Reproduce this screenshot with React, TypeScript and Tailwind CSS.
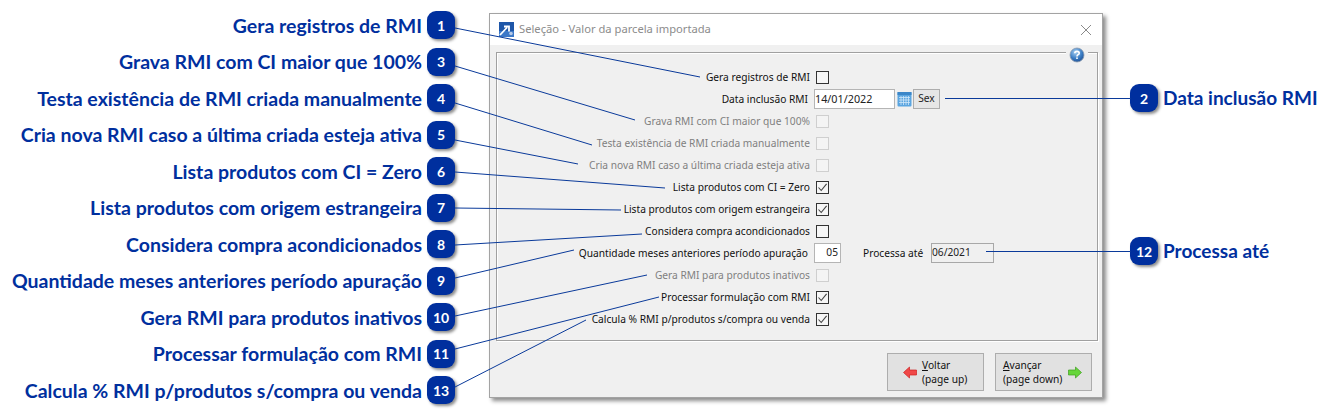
import React from "react";

const leftItems: [string, number][] = [
  ["Gera registros de RMI", 1],
  ["Grava RMI com CI maior que 100%", 3],
  ["Testa existência de RMI criada manualmente", 4],
  ["Cria nova RMI caso a última criada esteja ativa", 5],
  ["Lista produtos com CI = Zero", 6],
  ["Lista produtos com origem estrangeira", 7],
  ["Considera compra acondicionados", 8],
  ["Quantidade meses anteriores período apuração", 9],
  ["Gera RMI para produtos inativos", 10],
  ["Processar formulação com RMI", 11],
  ["Calcula % RMI p/produtos s/compra ou venda", 13],
];

const lines: [number, number, number, number][] = [
  [455, 28, 700, 77],
  [455, 66, 635, 120],
  [455, 103, 592, 145],
  [455, 140, 578, 164],
  [455, 172, 665, 188],
  [455, 208, 621, 210],
  [455, 245, 642, 234],
  [455, 278, 574, 250],
  [455, 316, 647, 275],
  [455, 349, 659, 297],
  [455, 387, 586, 320],
  [945, 98.5, 1131, 98.5],
  [986, 251.5, 1131, 251.5],
];

function Badge({ n }: { n: number }) {
  return (
    <div className="flex h-[28px] w-[28px] shrink-0 items-center justify-center rounded-[9px] bg-[#002f9e] font-['Lato',sans-serif] text-[14px] font-bold text-white shadow-[2px_2px_3px_rgba(0,0,0,0.45)]">
      {n}
    </div>
  );
}

function Check({ state }: { state: "on" | "off" | "disabled" }) {
  const cls =
    state === "disabled"
      ? "border-[#cfcfcf] bg-[#f4f4f4]"
      : "border-[#333333] bg-[#f6f6f6]";
  return (
    <div className={`flex h-[13px] w-[13px] shrink-0 items-center justify-center border ${cls}`}>
      {state === "on" && (
        <svg width="11" height="11" viewBox="0 0 11 11" fill="none">
          <path d="M1.5 5.5 L4.2 8.5 L9.6 1.8" stroke="#444" strokeWidth="1.1" />
        </svg>
      )}
    </div>
  );
}

function Row({ label, state }: { label: string; state: "on" | "off" | "disabled" }) {
  return (
    <div className="flex h-[22px] items-center">
      <div className={`w-[313px] whitespace-nowrap pt-[2px] text-right ${state === "disabled" ? "text-[#808080]" : "text-[#111111]"}`}>
        {label}
      </div>
      <div className="ml-[6px]">
        <Check state={state} />
      </div>
    </div>
  );
}

export default function App() {
  return (
    <div className="relative flex h-[419px] w-[1335px] overflow-hidden bg-white font-['Noto_Sans',sans-serif]">
      {/* left callouts */}
      <div className="flex w-[455px] shrink-0 flex-col pt-[7px]">
        {leftItems.map(([t, n]) => (
          <div key={n} className="flex h-[36.5px] items-center justify-end">
            <span className="mr-[5px] whitespace-nowrap font-['Lato',sans-serif] text-[19.5px] font-bold text-[#002f9e]">
              {t}
            </span>
            <Badge n={n} />
          </div>
        ))}
      </div>

      {/* dialog */}
      <div className="ml-[34px] mt-[13px] flex h-[385px] w-[614px] shrink-0 flex-col border border-[#a3a3a3] bg-[#f0f0f0] shadow-[3px_3px_4px_rgba(0,0,0,0.45)]">
        <div className="flex h-[31px] shrink-0 items-center bg-white pl-[9px] pr-[10px]">
          <svg width="15" height="15" viewBox="0 0 15 15">
            <rect width="15" height="15" fill="#1e56a8" />
            <rect y="9" width="15" height="6" fill="#3c78c8" />
            <path d="M1 13 L8 5.5 M5 4.5 H10 V9.5" stroke="#fff" strokeWidth="1.8" fill="none" />
            <circle cx="12" cy="11.5" r="1.8" fill="#b7c9e6" />
          </svg>
          <span className="ml-[5px] text-[11.2px] text-[#8c8c8c]">Seleção - Valor da parcela importada</span>
          <svg className="ml-auto" width="12" height="12" viewBox="0 0 12 12">
            <path d="M1 1 L11 11 M11 1 L1 11" stroke="#8a8a8a" strokeWidth="1" />
          </svg>
        </div>

        <div className="relative mx-[6px] mt-[7px] h-[289px] w-[602px] border border-[#a0a0a0] pt-[13px] text-[10.2px] shadow-[1px_1px_0_#fff,inset_1px_1px_0_#fff]">
          <div className="absolute right-[9px] top-[-7px] flex h-[18px] w-[22px] items-center justify-center bg-[#f0f0f0]">
            <svg width="16" height="16" viewBox="0 0 16 16">
              <defs>
                <radialGradient id="h" cx="40%" cy="30%" r="75%">
                  <stop offset="0%" stopColor="#a8d0f2" />
                  <stop offset="60%" stopColor="#3a7cc4" />
                  <stop offset="100%" stopColor="#1d4e92" />
                </radialGradient>
              </defs>
              <circle cx="8" cy="8" r="7" fill="url(#h)" stroke="#8a9bb0" strokeWidth="0.8" />
              <path d="M5.8 6.2 C5.8 3.8 10.2 3.8 10.2 6.2 C10.2 7.8 8 7.6 8 9.4" stroke="#fff" strokeWidth="1.6" fill="none" />
              <rect x="7.2" y="10.4" width="1.6" height="1.6" fill="#fff" />
            </svg>
          </div>

          <Row label="Gera registros de RMI" state="off" />
          <div className="flex h-[22px] items-center">
            <div className="w-[311px] whitespace-nowrap pt-[2px] text-right text-[#111111]">Data inclusão RMI</div>
            <div className="ml-[6px] flex h-[20px] w-[81px] items-center border border-[#b5b5b5] bg-white text-[10.8px] text-[#222]">
              14/01/2022
            </div>
            <svg className="ml-[2px]" width="15" height="16" viewBox="0 0 15 16">
              <rect x="0.5" y="1" width="14" height="14.5" rx="1" fill="#5ba5e0" />
              <rect x="0.5" y="1" width="14" height="3" fill="#3b86c8" />
              <path d="M2 6.5H13M2 9H13M2 11.5H13M4 5V14M6.5 5V14M9 5V14M11.5 5V14" stroke="#cfe6f8" strokeWidth="0.8" />
            </svg>
            <div className="ml-[1px] flex h-[20px] w-[27px] items-center justify-center border border-[#adadad] bg-[#e6e6e6] text-[#222]">
              Sex
            </div>
          </div>
          <Row label="Grava RMI com CI maior que 100%" state="disabled" />
          <Row label="Testa existência de RMI criada manualmente" state="disabled" />
          <Row label="Cria nova RMI caso a última criada esteja ativa" state="disabled" />
          <Row label="Lista produtos com CI = Zero" state="on" />
          <Row label="Lista produtos com origem estrangeira" state="on" />
          <Row label="Considera compra acondicionados" state="off" />
          <div className="flex h-[22px] items-center">
            <div className="w-[311px] whitespace-nowrap pt-[2px] text-right text-[#111111]">Quantidade meses anteriores período apuração</div>
            <div className="ml-[6px] flex h-[20px] w-[27px] items-center justify-end border border-[#b5b5b5] bg-white pr-[2px] text-[#222]">
              05
            </div>
            <div className="ml-[22px] w-[62px] pt-[2px] text-[#111111]">Processa até</div>
            <div className="ml-[6px] flex h-[20px] w-[63px] items-center border border-[#a8a8a8] bg-[#f0f0f0] text-[#222]">
              06/2021
            </div>
          </div>
          <Row label="Gera RMI para produtos inativos" state="disabled" />
          <Row label="Processar formulação com RMI" state="on" />
          <Row label="Calcula % RMI p/produtos s/compra ou venda" state="on" />
        </div>

        <div className="flex justify-end gap-[11px] pr-[10px] pt-[12px] text-[10.2px] leading-[14px] text-[#111111]">
          <div className="flex h-[38px] w-[97px] items-center border border-[#adadad] bg-[#e1e1e1] pl-[15px]">
            <svg width="14" height="13" viewBox="0 0 14 13">
              <path d="M0.5 6.5 L6.5 1 V4 H13.5 V9 H6.5 V12 Z" fill="#f04848" stroke="#d02020" strokeWidth="0.7" />
            </svg>
            <div className="ml-[5px]">
              <div><span className="underline">V</span>oltar</div>
              <div>(page up)</div>
            </div>
          </div>
          <div className="flex h-[38px] w-[97px] items-center border border-[#adadad] bg-[#e1e1e1] pl-[7px]">
            <div>
              <div><span className="underline">A</span>vançar</div>
              <div>(page down)</div>
            </div>
            <svg className="ml-[6px]" width="14" height="13" viewBox="0 0 14 13">
              <path d="M13.5 6.5 L7.5 1 V4 H0.5 V9 H7.5 V12 Z" fill="#66d63a" stroke="#3f9e20" strokeWidth="0.7" />
            </svg>
          </div>
        </div>
      </div>

      {/* right callouts */}
      <div className="ml-[27px] flex flex-col pt-[84px]">
        <div className="flex h-[28px] items-center">
          <Badge n={2} />
          <span className="ml-[5px] whitespace-nowrap font-['Lato',sans-serif] text-[19px] font-bold text-[#002f9e]">Data inclusão RMI</span>
        </div>
        <div className="mt-[125px] flex h-[28px] items-center">
          <Badge n={12} />
          <span className="ml-[5px] whitespace-nowrap font-['Lato',sans-serif] text-[19px] font-bold text-[#002f9e]">Processa até</span>
        </div>
      </div>

      {/* leader lines */}
      <svg className="pointer-events-none absolute left-0 top-0" width="1335" height="419">
        {lines.map(([a, b, c, d], i) => (
          <line key={i} x1={a} y1={b} x2={c} y2={d} stroke="#0a3a9a" strokeWidth="1" />
        ))}
      </svg>
    </div>
  );
}
